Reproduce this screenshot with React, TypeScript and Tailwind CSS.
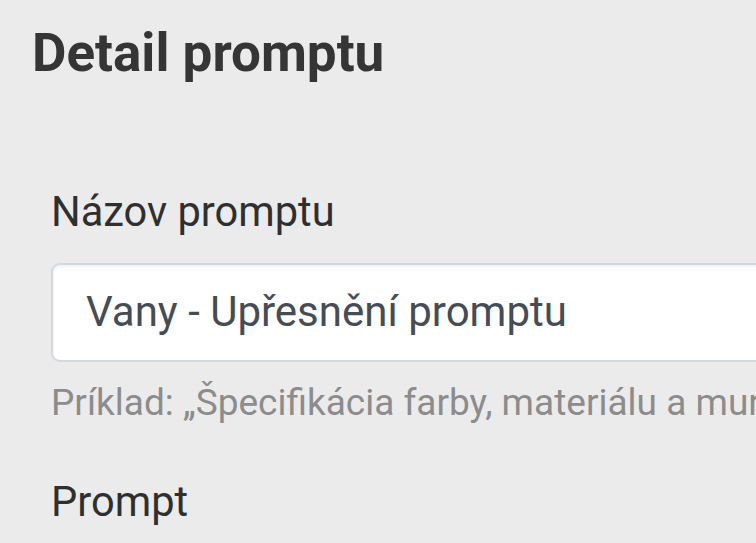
export default function App() {
  return (
    <div className="min-h-screen bg-[#ebebeb] overflow-hidden font-['Roboto',sans-serif]">
      <div className="pt-[27px] pl-[32px]">
        <h1 className="text-[53px] leading-none font-bold text-[#353535] whitespace-nowrap">
          Detail promptu
        </h1>
      </div>

      {/* Form */}
      <div className="pl-[51px] pt-[111px]">
        <label className="block text-[41.6px] leading-none text-[#2f2f2f] whitespace-nowrap">
          Názov promptu
        </label>
        <div className="mt-[30px] w-[760px] h-[99px] flex items-center bg-white border-2 border-[#d3d7de] rounded-[9px] shadow-[inset_0_2px_3px_rgba(0,0,0,0.06)] pl-[33px]">
          <span className="text-[42px] leading-none text-[#454c56] whitespace-nowrap">
            Vany - Upřesnění promptu
          </span>
        </div>
        <p className="mt-[22px] text-[37px] leading-none text-[#8c8c8c] whitespace-nowrap">
          Príklad: „Špecifikácia farby, materiálu a murovania“
        </p>
        <label className="block mt-[60px] text-[41.6px] leading-none text-[#2f2f2f] whitespace-nowrap">
          Prompt
        </label>
      </div>
    </div>
  );
}
